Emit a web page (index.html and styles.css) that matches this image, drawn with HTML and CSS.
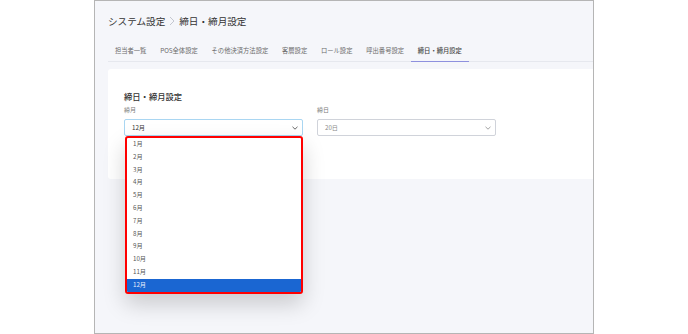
FILE: index.html
```html
<!DOCTYPE html>
<html lang="ja">
<head>
  <meta charset="UTF-8" />
  <title>システム設定 - 締日・締月設定</title>
  <meta name="viewport" content="width=device-width, initial-scale=1.0" />
  <link rel="stylesheet" href="styles.css">
</head>
<body>

  <div class="frame">

    <!-- Header -->
    <div class="page-header">
      <h1 class="title">
        システム設定
        <svg class="crumb-arrow" width="6" height="10" viewBox="0 0 6 10"><path d="M1 1l4 4-4 4" fill="none" stroke="#c4c7d0" stroke-width="1"/></svg>
        締日・締月設定
      </h1>

      <nav class="tabs">
        <span class="tab">担当者一覧</span>
        <span class="tab">POS全体設定</span>
        <span class="tab">その他決済方法設定</span>
        <span class="tab">客層設定</span>
        <span class="tab">ロール設定</span>
        <span class="tab">呼出番号設定</span>
        <span class="tab active">締日・締月設定</span>
      </nav>
    </div>

    <!-- Settings card -->
    <div class="card">
      <h2 class="card-title">締日・締月設定</h2>

      <div class="fields">
        <div class="field">
          <label class="field-label">締月</label>
          <div class="select focused">
            <span>12月</span>
            <svg class="chevron" width="6" height="4" viewBox="0 0 6 4"><path d="M0.5 0.8L3 3.2 5.5 0.8" fill="none" stroke="#555" stroke-width="0.9"/></svg>
          </div>

          <!-- Open dropdown -->
          <ul class="dropdown">
            <li>1月</li>
            <li>2月</li>
            <li>3月</li>
            <li>4月</li>
            <li>5月</li>
            <li>6月</li>
            <li>7月</li>
            <li>8月</li>
            <li>9月</li>
            <li>10月</li>
            <li>11月</li>
            <li class="selected">12月</li>
          </ul>
        </div>

        <div class="field">
          <label class="field-label">締日</label>
          <div class="select">
            <span class="muted">20日</span>
            <svg class="chevron" width="6" height="4" viewBox="0 0 6 4"><path d="M0.5 0.8L3 3.2 5.5 0.8" fill="none" stroke="#999" stroke-width="0.9"/></svg>
          </div>
        </div>
      </div>
    </div>

  </div>

</body>
</html>
```

FILE: styles.css
```css
:root {
  --bg: #f5f6fa;
  --frame: #b5b5b5;
  --text: #3a3a3a;
  --muted: #7a7a7a;
  --line: #e6e8ee;
  --accent: #8e90de;
  --focus: #a9d6f2;
  --red: #ff0000;
  --blue: #1a66d2;
}

body {
  margin: 0;
  background-color: white;
  font-family: "Noto Sans CJK JP", "Noto Sans", sans-serif;
  color: var(--text);
}

.frame {
  margin-left: 94px;
  width: 500px;
  height: 334px;
  box-sizing: border-box;
  border: 1px solid var(--frame);
  background-color: var(--bg);
  overflow: hidden;
}

.page-header {
  padding: 13px 0 0 13px;
}

.title {
  margin: 0;
  height: 14px;
  line-height: 14px;
  font-size: 9.6px;
  font-weight: 400;
  color: #333;
  display: flex;
  align-items: center;
  gap: 4px;
}

.crumb-arrow {
  display: block;
}

.tabs {
  margin-top: 12px;
  display: flex;
  border-bottom: 1px solid var(--line);
}

.tab {
  padding: 0 6.9px;
  height: 21px;
  line-height: 21px;
  font-size: 6.3px;
  color: #6b6b6b;
  margin-bottom: -1px;
  border-bottom: 1px solid transparent;
}

.tab.active {
  color: #444;
  font-weight: 500;
  border-bottom-color: var(--accent);
}

.card {
  margin: 7px 0 0 13px;
  height: 110px;
  background-color: white;
  border-radius: 3px 0 0 3px;
  padding: 21px 0 0 16px;
  box-sizing: border-box;
}

.card-title {
  margin: 0;
  height: 12px;
  line-height: 12px;
  font-size: 8.3px;
  font-weight: 500;
  color: #333;
}

.fields {
  display: flex;
  gap: 14px;
  margin-top: 3px;
}

.field {
  position: relative;
  width: 179px;
}

.field-label {
  display: block;
  height: 10px;
  line-height: 10px;
  font-size: 6px;
  color: var(--muted);
  margin-bottom: 4px;
}

.select {
  height: 17px;
  box-sizing: border-box;
  border: 1px solid #d0d3da;
  border-radius: 2px;
  padding: 0 4px 0 7px;
  display: flex;
  align-items: center;
  justify-content: space-between;
  font-size: 6.2px;
  color: #333;
}

.select.focused {
  border-color: var(--focus);
}

.muted {
  color: #8a8a8a;
}

.chevron {
  display: block;
}

.dropdown {
  position: absolute;
  top: 31px;
  left: 1px;
  width: 178px;
  margin: 0;
  padding: 0;
  list-style: none;
  box-sizing: border-box;
  border: 2px solid var(--red);
  border-radius: 3px;
  background-color: white;
  overflow: hidden;
  box-shadow: 0 10px 22px rgba(0, 0, 0, 0.18);
}

.dropdown li {
  height: 12.8px;
  line-height: 12.8px;
  padding-left: 6px;
  font-size: 6.2px;
  color: #555;
}

.dropdown li.selected {
  background-color: var(--blue);
  color: #e8eefc;
}
```
